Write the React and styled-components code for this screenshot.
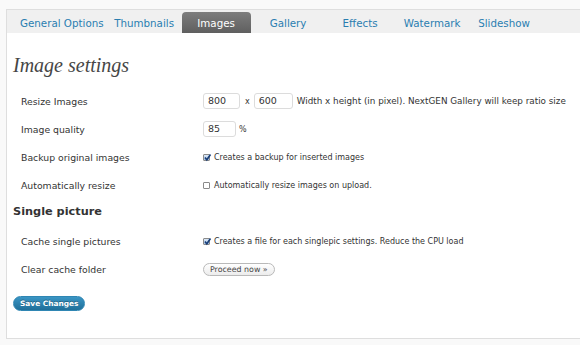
import React from "react";
import styled, { createGlobalStyle } from "styled-components";

const Global = createGlobalStyle`
  html, body { margin: 0; padding: 0; overflow: hidden; background: #f9f9f9; }
  body { font-family: "DejaVu Sans", "Lucida Grande", sans-serif; color: #333; }
`;

const Page = styled.div`
  padding: 9px 0 0 6px;
  width: 600px;
`;

const Panel = styled.div`
  border: 1px solid #dedede;
  background: #fff;
  height: 328px;
  box-shadow: 0 1px 0 #ececec;
`;

const TabBar = styled.div`
  display: flex;
  align-items: flex-end;
  height: 23px;
  padding-left: 10px;
  background: #f0f0f0;
`;

const Tab = styled.div`
  min-width: 69px;
  height: 21px;
  margin-right: 3px;
  padding: 0 3px;
  box-sizing: border-box;
  display: flex;
  align-items: center;
  justify-content: center;
  font-size: 10.3px;
  color: ${(p) => (p.$active ? "#fff" : "#2a7eb0")};
  border-radius: 4px 4px 0 0;
  background: ${(p) =>
    p.$active ? "linear-gradient(#7d7d7d, #5f5f5f)" : "transparent"};
  white-space: nowrap;
`;

const Content = styled.div`
  padding: 20px 0 0 6px;
`;

const Heading = styled.h2`
  margin: 0 0 10px;
  font-family: "Liberation Serif", "Times New Roman", serif;
  font-style: italic;
  font-weight: normal;
  font-size: 20px;
  line-height: 24px;
  color: #464646;
`;

const SubHeading = styled.h3`
  margin: 0;
  font-size: 11.3px;
  font-weight: bold;
  color: #333;
  height: 28px;
  line-height: 26px;
`;

const Row = styled.div`
  display: grid;
  grid-template-columns: 190px 1fr;
  align-items: center;
  height: 28px;
`;

const Label = styled.div`
  padding-left: 8px;
  font-size: 9.3px;
  color: #333;
`;

const Value = styled.div`
  display: flex;
  align-items: center;
  font-size: 8px;
  color: #333;
  white-space: nowrap;
`;

const Input = styled.div`
  width: ${(p) => p.$w}px;
  height: 16px;
  box-sizing: border-box;
  border: 1px solid #dcdcdc;
  border-radius: 3px;
  padding-left: 4px;
  font-size: 9.5px;
  line-height: 14px;
  color: #333;
  background: #fff;
`;

const Sep = styled.span`
  margin: 0 ${(p) => p.$r ?? 4}px 0 ${(p) => p.$l ?? 5}px;
  font-size: ${(p) => p.$size ?? 8}px;
`;

const Box = styled.span`
  width: 7px;
  height: 7px;
  box-sizing: border-box;
  border: 1px solid #8a8a8a;
  border-radius: 1px;
  background: ${(p) => (p.$checked ? "linear-gradient(#dce9f7, #a9c6e8)" : "#fff")};
  margin-right: 4px;
  position: relative;
  flex: none;
`;

const Check = styled.svg`
  position: absolute;
  left: -1px;
  top: -2px;
`;

const PillButton = styled.div`
  height: 13px;
  box-sizing: border-box;
  padding: 0 6px;
  border: 1px solid #b9b9b9;
  border-radius: 8px;
  background: linear-gradient(#ffffff, #ececec);
  font-size: 7.9px;
  line-height: 11px;
  color: #464646;
`;

const Footer = styled.div`
  padding: 8px 0 0 0;
`;

const SaveButton = styled.div`
  display: inline-block;
  height: 15px;
  box-sizing: border-box;
  padding: 0 6px;
  border: 1px solid #2f86b3;
  border-radius: 8px;
  background: linear-gradient(#3a95c4, #1f6f99);
  color: #fff;
  font-weight: bold;
  font-size: 7.4px;
  line-height: 13px;
  text-shadow: 0 -1px 0 rgba(0, 0, 0, 0.3);
`;

const Checkbox = ({ checked }) => (
  <Box $checked={checked}>
    {checked && (
      <Check width="9" height="9" viewBox="0 0 9 9">
        <path d="M2 4.5 L3.8 6.8 L7.5 1.5" fill="none" stroke="#1a3f78" strokeWidth="1.6" />
      </Check>
    )}
  </Box>
);

const tabs = ["General Options", "Thumbnails", "Images", "Gallery", "Effects", "Watermark", "Slideshow"];

export default function App() {
  return (
    <>
      <Global />
      <Page>
        <Panel>
          <TabBar>
            {tabs.map((t) => (
              <Tab key={t} $active={t === "Images"}>
                {t}
              </Tab>
            ))}
          </TabBar>
          <Content>
            <Heading>Image settings</Heading>
            <Row>
              <Label>Resize Images</Label>
              <Value>
                <Input $w={37}>800</Input>
                <Sep>x</Sep>
                <Input $w={39}>600</Input>
                <Sep $l={4} $size={8.8}>Width x height (in pixel). NextGEN Gallery will keep ratio size</Sep>
              </Value>
            </Row>
            <Row>
              <Label>Image quality</Label>
              <Value>
                <Input $w={33}>85</Input>
                <Sep $l={3}>%</Sep>
              </Value>
            </Row>
            <Row>
              <Label>Backup original images</Label>
              <Value>
                <Checkbox checked />
                Creates a backup for inserted images
              </Value>
            </Row>
            <Row>
              <Label>Automatically resize</Label>
              <Value>
                <Checkbox />
                Automatically resize images on upload.
              </Value>
            </Row>
            <SubHeading>Single picture</SubHeading>
            <Row>
              <Label>Cache single pictures</Label>
              <Value>
                <Checkbox checked />
                Creates a file for each singlepic settings. Reduce the CPU load
              </Value>
            </Row>
            <Row>
              <Label>Clear cache folder</Label>
              <Value>
                <PillButton>Proceed now »</PillButton>
              </Value>
            </Row>
            <Footer>
              <SaveButton>Save Changes</SaveButton>
            </Footer>
          </Content>
        </Panel>
      </Page>
    </>
  );
}
